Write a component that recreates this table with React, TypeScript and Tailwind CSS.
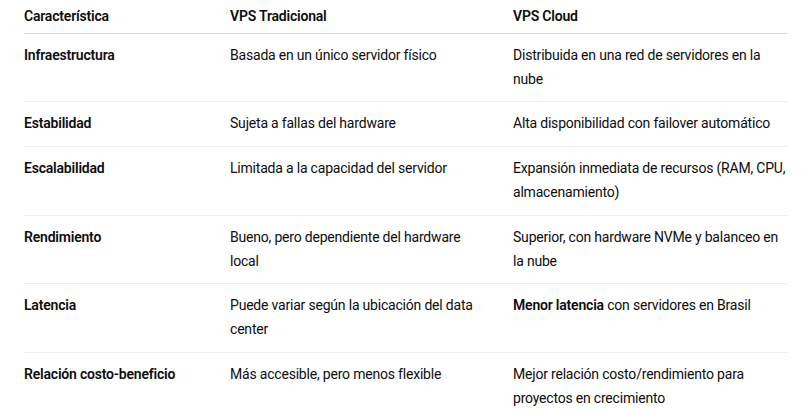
const rows: { label: string; trad: string; cloud: React.ReactNode }[] = [
  {
    label: 'Infraestructura',
    trad: 'Basada en un único servidor físico',
    cloud: 'Distribuida en una red de servidores en la nube',
  },
  {
    label: 'Estabilidad',
    trad: 'Sujeta a fallas del hardware',
    cloud: 'Alta disponibilidad con failover automático',
  },
  {
    label: 'Escalabilidad',
    trad: 'Limitada a la capacidad del servidor',
    cloud: 'Expansión inmediata de recursos (RAM, CPU, almacenamiento)',
  },
  {
    label: 'Rendimiento',
    trad: 'Bueno, pero dependiente del hardware local',
    cloud: 'Superior, con hardware NVMe y balanceo en la nube',
  },
  {
    label: 'Latencia',
    trad: 'Puede variar según la ubicación del data center',
    cloud: (
      <>
        <strong className="font-semibold">Menor latencia</strong> con servidores en Brasil
      </>
    ),
  },
  {
    label: 'Relación costo-beneficio',
    trad: 'Más accesible, pero menos flexible',
    cloud: 'Mejor relación costo/rendimiento para proyectos en crecimiento',
  },
];

export default function App() {
  return (
    <div className="min-h-[416px] bg-white pl-6 pr-[21px] font-['Roboto',sans-serif] text-[14px] leading-[1.7] tracking-[-0.2px] text-[#0d0d0d]">
      {/* header */}
      <div className="grid grid-cols-[206px_283px_274px] border-b border-[#d9d9d9] pt-[5px] pb-[4px] font-semibold">
        <div>Característica</div>
        <div>VPS Tradicional</div>
        <div>VPS Cloud</div>
      </div>
      {rows.map((row, i) => (
        <div
          key={row.label}
          className={`grid grid-cols-[206px_283px_274px] py-[10px] ${i < rows.length - 1 ? 'border-b border-[#ededed]' : ''}`}
        >
          <div className="pr-4 font-semibold">{row.label}</div>
          <div className="pr-[34px]">{row.trad}</div>
          <div>{row.cloud}</div>
        </div>
      ))}
    </div>
  );
}
